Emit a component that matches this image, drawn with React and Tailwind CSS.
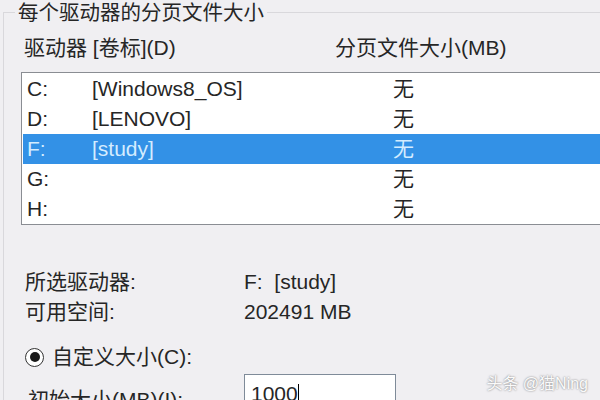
const DRIVES = [
  { letter: "C:", label: "[Windows8_OS]", size: "无" },
  { letter: "D:", label: "[LENOVO]", size: "无" },
  { letter: "F:", label: "[study]", size: "无", selected: true },
  { letter: "G:", label: "", size: "无" },
  { letter: "H:", label: "", size: "无" },
];

function DriveRow({ d }) {
  return (
    <div
      className={`flex items-center h-[30px] ${
        d.selected ? "bg-[#3391e6] text-[#d4ecff]" : "text-[#262626]"
      }`}
    >
      <span className="w-[69px] pl-[4px]">{d.letter}</span>
      <span className="w-[301px]">{d.label}</span>
      <span>{d.size}</span>
    </div>
  );
}

export default function App() {
  return (
    <div
      className="relative w-[600px] h-[400px] overflow-hidden bg-[#f0eff2] text-[21px] leading-[24px] text-[#262626]"
      style={{ fontFamily: '"Liberation Sans", "Noto Sans CJK SC", sans-serif' }}
    >
      {/* group box */}
      <div className="relative ml-[3px] mt-[12px] h-[400px] border-l border-t border-[#d9d8dc]">
        <div className="absolute left-[11px] -top-[12px] bg-[#f0eff2] px-[3px] text-[20.5px]">
          每个驱动器的分页文件大小
        </div>

        <div className="pt-[23px] flex">
          <span className="w-[331px] pl-[20px]">驱动器 [卷标](D)</span>
          <span>分页文件大小(MB)</span>
        </div>

        <div className="ml-[17px] mt-[12px] h-[153px] border border-r-0 border-[#8a8d93] bg-white pl-[1px] pt-px">
          {DRIVES.map((d) => (
            <DriveRow key={d.letter} d={d} />
          ))}
        </div>

        <div className="mt-[45px] flex flex-col gap-[6px]">
          <div className="flex">
            <span className="w-[240px] pl-[21px]">所选驱动器:</span>
            <span className="whitespace-pre">F:  [study]</span>
          </div>
          <div className="flex">
            <span className="w-[240px] pl-[21px]">可用空间:</span>
            <span>202491 MB</span>
          </div>
        </div>

        <div className="mt-[21px] flex items-center pl-[21px] gap-[8px]">
          <span className="w-[19px] h-[19px] rounded-full border border-[#333] bg-white flex items-center justify-center">
            <span className="w-[10px] h-[10px] rounded-full bg-[#1a1a1a]" />
          </span>
          <span>自定义大小(C):</span>
        </div>

        <div className="mt-[5px] flex">
          <span className="w-[240px] pl-[24px] pt-[14px]">初始大小(MB)(I):</span>
          <div className="w-[152px] h-[34px] border border-[#7f8b99] bg-white flex items-center pl-[6px] pt-[6px]">
            <span>1000</span>
            <span className="w-px h-[21px] bg-black" />
          </div>
        </div>
      </div>

      <div className="absolute right-[12px] bottom-[7px] text-[16px] leading-[18px] text-[#fafafa] [text-shadow:0_0_2px_rgba(0,0,0,0.55)]">
        头条 @猫Ning
      </div>
    </div>
  );
}
